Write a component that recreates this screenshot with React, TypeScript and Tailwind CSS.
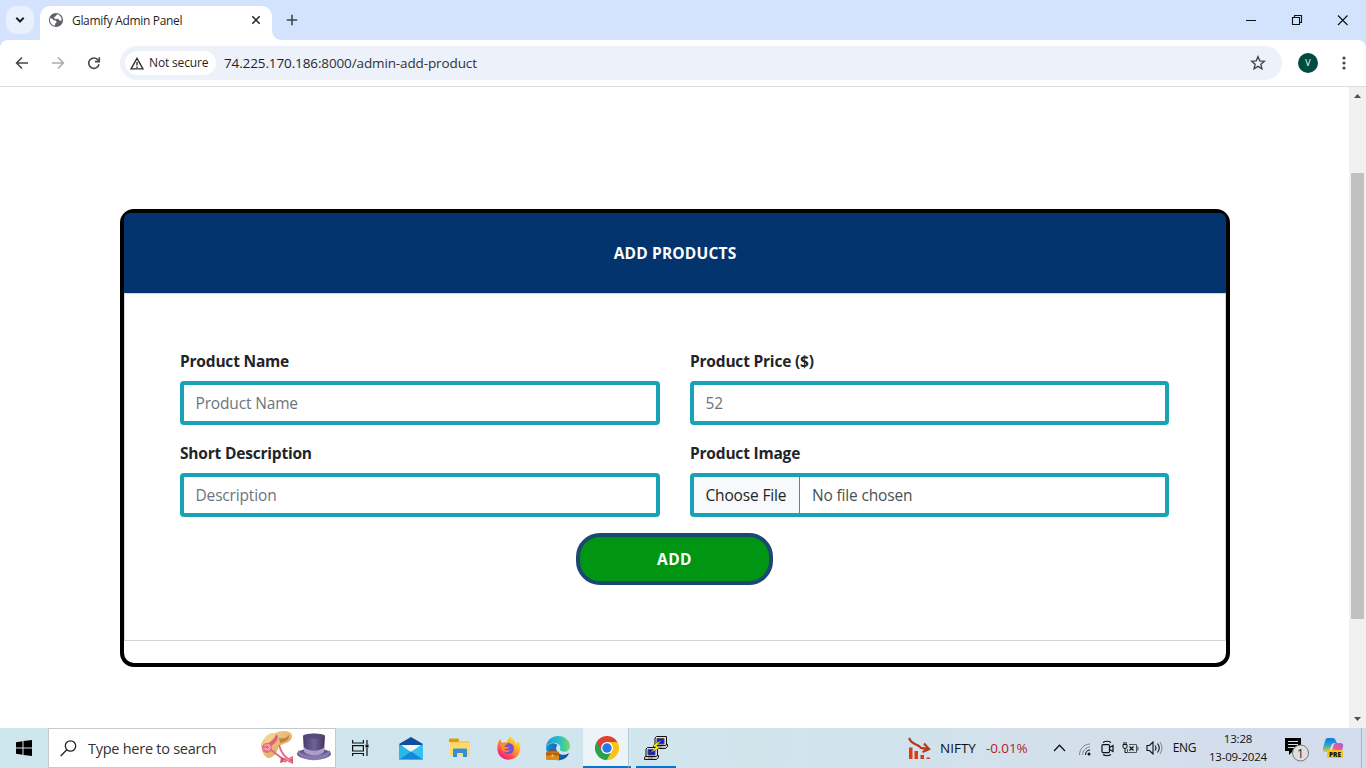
import type { ReactNode } from 'react';

function TabStrip() {
  return (
    <div className="flex h-10 bg-[#d3e3fd]">
      <div className="flex w-10 shrink-0 items-start pl-1.5 pt-1.5">
        <div className="flex h-7 w-7 items-center justify-center rounded-[10px] bg-[#e9f0fd]">
          <svg width="10" height="8" viewBox="0 0 10 8" fill="none" stroke="#1f1f1f" strokeWidth="2">
            <path d="M1.3 1.8 5 5.5 8.7 1.8" />
          </svg>
        </div>
      </div>
      <div className="mt-1.5 flex h-[34px] w-[232px] shrink-0 items-center rounded-t-[10px] bg-white pb-1.5 pl-2 pr-[11px]">
        <svg width="16" height="16" viewBox="0 0 16 16">
          <circle cx="8" cy="8" r="7.1" fill="#5f6368" />
          <path d="M1.9 6.2 4 6.4l1.6 1.8 2.2.3.9 1.6-1.6 1.6-.2 2C3.800 13.400 1.800 10.500 1.900 6.200ZM9.300 2.200 7.300 4.600 6.300 5.100 6.200 6.600 8.200 7.100 10.300 6.700 11.200 8.400 13.700 8.500C13.900 5.200 12 2.800 9.300 2.200Z" fill="#fff" />
        </svg>
        <span className="ml-2 flex-1 whitespace-nowrap pt-0.5 text-[12px] tracking-[-0.32px] text-[#1f1f1f]">Glamify Admin Panel</span>
        <svg width="10" height="10" viewBox="0 0 10 10" stroke="#1f1f1f" strokeWidth="1.5">
          <path d="M1.300 1.300 8.700 8.700M8.700 1.300 1.300 8.700" />
        </svg>
      </div>
      <svg className="shrink-0" width="10" height="40" viewBox="0 0 10 40">
        <path d="M0 30V40H10C4 40 0 36 0 30Z" fill="#fff" />
      </svg>
      <svg className="ml-1 mt-3.5 shrink-0" width="12" height="12" viewBox="0 0 12 12" stroke="#41464d" strokeWidth="1.6">
        <path d="M6 .800V11.200M.800 6H11.200" />
      </svg>
      <div className="flex-1" />
      <svg className="shrink-0" width="138" height="40" viewBox="0 0 138 40" fill="none" stroke="#111" strokeWidth="1">
        <path d="M18 20.500H28" />
        <path d="M64.500 17.500h7v7h-7zM66.500 17v-1.500h7v7H72" strokeWidth="1.100" />
        <path d="M110 15.500 119.500 25M119.500 15.500 110 25" strokeWidth="1.150" />
      </svg>
    </div>
  );
}

function Toolbar() {
  return (
    <div className="bg-[#d3e3fd]">
      <div className="flex h-[47px] items-center rounded-t-[8px] border-b border-[#dcdde0] bg-white pl-[15px] pr-4">
        <svg width="14" height="14" viewBox="0 0 14 14" fill="none" stroke="#474747" strokeWidth="1.600">
          <path d="M7 1.500 1.600 7 7 12.500M1.600 7H13" />
        </svg>
        <svg className="ml-[22px]" width="14" height="14" viewBox="0 0 14 14" fill="none" stroke="#ababab" strokeWidth="1.500">
          <path d="M7 1.500 12.400 7 7 12.500M12.400 7H1" />
        </svg>
        <svg className="ml-[22px]" width="14" height="14" viewBox="0 0 14 14" fill="none" stroke="#474747" strokeWidth="1.600">
          <path d="M12 8.300A5.200 5.200 0 1 1 11.200 4.200L12 5.100" />
          <path d="M12.300 1.200V5.600H7.900" />
        </svg>
        <div className="ml-[19px] flex h-[34px] w-[1162px] items-center rounded-full bg-[#edf1fa] pl-[5px] pr-4">
          <div className="flex h-6 w-[91px] items-center rounded-full bg-white pl-[5px]">
            <svg width="14" height="13" viewBox="0 0 14 13" fill="none" stroke="#303134" strokeWidth="1.400">
              <path d="M7 1.300 13 11.900H1ZM7 5V8.500M7 9.500V11" />
            </svg>
            <span className="ml-[5px] whitespace-nowrap text-[12px] font-medium tracking-[-0.150px] text-[#1f1f1f]">Not secure</span>
          </div>
          <span className="ml-2 flex-1 whitespace-nowrap text-[13.500px] tracking-[-0.120px] text-[#303236]">
            <span className="text-[#1f1f1f]">74.225.170.186</span>:8000/admin-add-product
          </span>
          <svg width="16" height="16" viewBox="0 0 16 16" fill="none" stroke="#474747" strokeWidth="1.400">
            <path d="M8 1.700 9.800 5.900 14.300 6.300 10.900 9.300 11.900 13.800 8 11.400 4.100 13.800 5.100 9.300 1.700 6.300 6.200 5.900Z" />
          </svg>
        </div>
        <div className="ml-4 flex h-5 w-5 items-center justify-center rounded-full bg-[#004d40] text-[9px] text-white">V</div>
        <svg className="ml-6" width="4" height="16" viewBox="0 0 4 16" fill="#474747">
          <circle cx="2" cy="3" r="1.600" /><circle cx="2" cy="8" r="1.600" /><circle cx="2" cy="13" r="1.600" />
        </svg>
      </div>
    </div>
  );
}

function Field({ label, children }: { label: string; children: ReactNode }) {
  return (
    <div className="min-w-0">
      <div className="mb-2 h-6 whitespace-nowrap text-[15.500px] font-bold leading-6 tracking-[-0.200px] text-[#212529]">{label}</div>
      <div className="flex h-11 items-stretch overflow-hidden rounded-[4px] border-4 border-[#17a2b8] bg-white text-[15.500px] leading-[37px] tracking-[-0.160px]">
        {children}
      </div>
    </div>
  );
}

function ProductForm() {
  return (
    <div className="flex min-w-0 flex-1 flex-col pl-[120px] pr-[119px] pt-[122px]">
      <div className="h-[458px] rounded-[14px] border-4 border-black">
        <div className="flex h-20 items-center justify-center rounded-t-[6px] bg-[#03346e] pt-px text-[15.500px] font-bold tracking-[0.180px] text-white">
          ADD PRODUCTS
        </div>
        <div className="h-[348px] border border-[#ced4da] px-[55px] pt-[55px]">
          <div className="grid grid-cols-[480px_479px] gap-x-[30px] gap-y-4">
            <Field label="Product Name">
              <span className="pl-[11.5px] text-[#6c757d]">Product Name</span>
            </Field>
            <Field label="Product Price ($)">
              <span className="pl-[11.5px] text-[#6c757d]">52</span>
            </Field>
            <Field label="Short Description">
              <span className="pl-[11.5px] text-[#6c757d]">Description</span>
            </Field>
            <Field label="Product Image">
              <span className="w-[106px] whitespace-nowrap border-r border-[#17a2b8] bg-[#f8f9fa] pl-[11.5px] text-[#212529]">Choose File</span>
              <span className="pl-3 text-[#495057]">No file chosen</span>
            </Field>
          </div>
          <button className="ml-[396px] mt-4 block h-[52px] w-[197px] rounded-[24px] border-4 border-[#1b4870] bg-[#009513] pt-px text-[15.500px] font-bold tracking-[0.400px] text-white">
            ADD
          </button>
        </div>
      </div>
    </div>
  );
}

function ScrollBar() {
  return (
    <div className="flex w-[17px] shrink-0 flex-col items-center bg-[#f1f1f1]">
      <svg className="shrink-0" width="7" height="16" viewBox="0 0 7 16" fill="#505050">
        <path d="M0 11 3.500 7 7 11Z" />
      </svg>
      <div className="mt-[70px] h-[446px] w-[13px] shrink-0 bg-[#c1c1c1]" />
      <div className="flex-1" />
      <svg className="mb-[7px] shrink-0" width="7" height="4" viewBox="0 0 7 4" fill="#505050">
        <path d="M0 0 3.500 4 7 0Z" />
      </svg>
    </div>
  );
}

function Hats() {
  return (
    <svg width="72" height="38" viewBox="0 0 72 38">
      <defs>
        <linearGradient id="straw" x1="0" y1="0" x2="1" y2="1"><stop stopColor="#f8d89b" /><stop offset="1" stopColor="#d99c4c" /></linearGradient>
        <linearGradient id="felt"><stop stopColor="#463c68" /><stop offset=".5" stopColor="#6f6298" /><stop offset="1" stopColor="#43365e" /></linearGradient>
      </defs>
      <path d="M1 15C4 9 8 3 15 4 20 1 32 1 32 7 32 13 25 14 19 17 17 23 14 29 8 29 4 28 1 21 1 15Z" fill="url(#straw)" />
      <path d="M6 9C9 3 18 3 19 8 16 11 13 14 9 18L4 16Z" fill="#f4cf8f" />
      <path d="M19 9Q25 11 29 6Q30 12 20 14Z" fill="#bd8140" />
      <path d="M5 15C10 14 15 10 16 5L18 7C18 13 12 17 7 19Z" fill="#dc6478" />
      <path d="M11 21C16 25 21 28 26 33M19 16C21 23 24 28 30 31" fill="none" stroke="#e2647c" strokeWidth="1.800" />
      <circle cx="7" cy="19" r="5" fill="#e86a80" />
      <path d="M4 17q3-3 5 0t-4 4M8 15q4 3 1 6M3 20q4-2 6 2" fill="none" stroke="#ffb4bd" />
      <path d="M21 28 27 30 33 27 33 35 27 32 20 34Z" fill="#d85270" />
      <path d="M24 29 32 33M23 32 33 29" stroke="#f492a4" />
      <ellipse cx="54" cy="25" rx="17" ry="5.500" fill="#66598c" />
      <path d="M38 21C42 28 64 29 70 21 73 34 36 35 38 21Z" fill="#8779b2" />
      <path d="M43 7C47 4 61 4 65 7L64 23C59 28 49 27 44 23Z" fill="url(#felt)" />
      <path d="M44 18C49 23 59 23 64.500 18L64 23C59 28 49 27 44 23Z" fill="#a99fca" />
      <ellipse cx="54" cy="7" rx="11" ry="2.500" fill="#564a78" />
    </svg>
  );
}

function Mail() {
  return (
    <svg width="24" height="24" viewBox="0 0 24 24">
      <path d="M0 8 12 1 24 8V16H0Z" fill="#0d4f9c" />
      <path d="M2 9H22L12 18Z" fill="#f3f4f4" />
      <path d="M0 8 12 16 0 23.500Z" fill="#29b7e9" />
      <path d="M24 8 0 23.500H24Z" fill="#35c1f1" />
      <path d="M12 15.500 24 23.500H0Z" fill="#1688d9" />
    </svg>
  );
}

function Explorer() {
  return (
    <svg width="22" height="20" viewBox="0 0 22 20">
      <path d="M1 1H9L11 3H20Q21 3 21 4V18H1Z" fill="#fccb51" />
      <path d="M0 1.500Q0 .500 1 .500H9Q10 .500 10 2T9 4H0Z" fill="#dc9d0c" />
      <path d="M1 5H21V18H1Z" fill="#ffda6b" />
      <path d="M4 11.500Q4 10.500 5 10.500H17Q18 10.500 18 11.500V19H14V15H8V19H4Z" fill="#348dd5" />
    </svg>
  );
}

function Firefox() {
  return (
    <svg width="24" height="24" viewBox="0 0 24 24">
      <defs>
        <linearGradient id="fire" x1=".9" y1="0" x2=".2" y2="1"><stop stopColor="#fff44f" /><stop offset=".4" stopColor="#ffac1f" /><stop offset=".75" stopColor="#ff4a55" /><stop offset="1" stopColor="#e31587" /></linearGradient>
      </defs>
      <path d="M13 0C15 3 18 4 19 8L21 5C24 9 24 14 21 19 17 25 7 25 3 20-1 15 0 8 3 3L5 7 10 6C11 3 12 2 13 0Z" fill="url(#fire)" />
      <circle cx="11.500" cy="12.500" r="5.500" fill="#7550d9" />
      <path d="M3 8C6 6 9 7 11 8 8 9 7 10 8 11L12 11C11 13.500 8 13 7 13 9 15 12 15 14 13 12 17 8 17 5 14Z" fill="#ff8a30" />
    </svg>
  );
}

function Edge() {
  return (
    <svg width="26" height="26" viewBox="0 0 26 26">
      <defs>
        <linearGradient id="edge-top"><stop stopColor="#2098dc" /><stop offset=".55" stopColor="#26bfc4" /><stop offset="1" stopColor="#75dc5c" /></linearGradient>
        <linearGradient id="edge-low"><stop stopColor="#168cd8" /><stop offset="1" stopColor="#144795" /></linearGradient>
      </defs>
      <path d="M1 13C1 6 6 1 13 1 20 1 25 6 25 11 25 16 20 18 16 16 14 15 16 13 15 11 12 6 3 7 1 13Z" fill="url(#edge-top)" />
      <path d="M1 13C3 8 9 7 12.500 10 10 12 11 17 15 19 18 20.500 21 20 24 18 22 24 16 26 11 25Q2 22 1 13Z" fill="url(#edge-low)" />
      <rect x="1" y="16.500" width="13" height="8.500" rx="1" fill="#df8b1c" />
      <path d="M5 16.500V15H10V16.500" fill="none" stroke="#8e5415" strokeWidth="1.500" />
      <path d="M1 17.500H14V20.500H1Z" fill="#ad621a" /><path d="M6.500 19.500h2v2h-2z" fill="#ffd16c" />
    </svg>
  );
}

function Chrome() {
  return (
    <svg width="24" height="24" viewBox="0 0 24 24">
      <path d="M12 12 1.600 6A12 12 0 0 0 12 24L17.200 15Z" fill="#27a34b" />
      <path d="M12 12 12 24A12 12 0 0 0 22.400 6H12L17.200 15 12 24Z" fill="#fbc116" />
      <path d="M12 6H22.400A12 12 0 0 0 1.600 6L6.800 15 12 12Z" fill="#dc4134" />
      <circle cx="12" cy="12" r="6" fill="#fff" /><circle cx="12" cy="12" r="4.700" fill="#2876e7" />
    </svg>
  );
}

function Putty() {
  return (
    <svg width="24" height="24" viewBox="0 0 24 24" stroke="#111" strokeWidth="1" strokeLinejoin="round">
      <path d="M11 8.500H23.500V10.500L21.500 12.500H9.500V10.500Z" fill="#c9c9c9" />
      <path d="M12.500.500H22.500V8.500L21 9.500H11V2Z" fill="#ddd" />
      <path d="M13 2.500H20V8H13Z" fill="#0a16e6" stroke="#555" />
      <path d="M2 19.500H14.500V21.500L12.500 23.500H.500V21.500Z" fill="#c9c9c9" />
      <path d="M3.500 11.500H13.500V19.500L12 20.500H2V13Z" fill="#ddd" />
      <path d="M4 13.500H11V19H4Z" fill="#0a16e6" stroke="#555" />
      <path d="M4 22H9M13 11H18" stroke="#777" />
      <path d="M17.500 4 9 9.500 12 11 6.500 16.500 15.500 12 12.500 10Z" fill="#ffec00" stroke="#736a00" strokeWidth=".4" />
    </svg>
  );
}

function Taskbar() {
  return (
    <div className="flex h-10 items-stretch bg-linear-to-r from-[#cee6ee] via-[#d1e5ed] to-[#d3dceb] text-[#111]">
      <div className="flex w-12 shrink-0 items-center justify-center">
        <svg width="16" height="16" viewBox="0 0 16 16" fill="#000"><path d="M0 2.200 6.500 1.300V7.500H0ZM7.500 1.100 16 0V7.500H7.500ZM0 8.500H6.500V14.700L0 13.800ZM7.500 8.500H16V16L7.500 14.900Z" /></svg>
      </div>
      <div className="flex w-[288px] shrink-0 items-center border border-[#c4c9cb] bg-white pl-[11px]">
        <svg width="17" height="17" viewBox="0 0 17 17" fill="none" stroke="#222" strokeWidth="1.300"><circle cx="10.500" cy="6" r="5.200" /><path d="M6.800 9.700 .700 16" /></svg>
        <span className="ml-[11px] flex-1 whitespace-nowrap pt-px text-[14.500px] tracking-[-0.260px] text-[#333]">Type here to search</span>
        <div className="mr-[3px]"><Hats /></div>
      </div>
      <div className="flex w-12 shrink-0 items-center justify-center">
        <svg width="17" height="16" viewBox="0 0 17 16" fill="none" stroke="#111" strokeWidth="1.200"><path d="M.600 0V3H11.400V0M.600 16V13.500H11.400V16M.600 5.600H11.400V11H.600ZM15 0V4M15 8V16" /><path d="M13.500 4.500h3v3h-3z" fill="#111" stroke="none" /></svg>
      </div>
      <div className="ml-[3px] flex w-12 shrink-0 items-center justify-center"><Mail /></div>
      <div className="flex w-[49px] shrink-0 items-center justify-center"><Explorer /></div>
      <div className="flex w-[49px] shrink-0 items-center justify-center"><Firefox /></div>
      <div className="flex w-[50px] shrink-0 items-center justify-center"><Edge /></div>
      <div className="flex w-[45px] shrink-0 items-center justify-center border-b-2 border-[#0078d7] bg-[#edf4f8] pl-[3px] pt-0.5"><Chrome /></div>
      <div className="w-[3px] shrink-0 border-b-2 border-l border-b-[#0078d7] border-l-[#b4c9d6] bg-[#d9e9f1]" />
      <div className="ml-[5px] flex w-10 shrink-0 items-center justify-center border-b-2 border-[#0078d7] pt-0.5"><Putty /></div>
      <div className="flex-1" />
      <div className="flex w-[32px] shrink-0 items-center">
        <svg width="23" height="23" viewBox="0 0 23 23"><path d="M1 1C4 9 10 6 13 11L20 12M16 6.500 21 12 14.500 15" fill="none" stroke="#b83a1b" strokeWidth="2.300" /><path d="M1 10.500H4.500V22H1ZM6.500 14H10V22H6.500ZM12.500 18H16V22H12.500ZM18.500 20.500H22V22H18.500Z" fill="#df3b0c" /></svg>
      </div>
      <span className="flex w-[46px] shrink-0 items-center text-[13.500px]">NIFTY</span>
      <span className="flex w-[60px] shrink-0 items-center whitespace-nowrap text-[13.500px] tracking-[-0.100px] text-[#b71c1c]">-0.01%</span>
      <div className="flex w-[26px] shrink-0 items-center justify-center"><svg width="13" height="8" viewBox="0 0 13 8" fill="none" stroke="#111" strokeWidth="1.300"><path d="M1 7 6.500 1.300 12 7" /></svg></div>
      <div className="flex w-[25px] shrink-0 items-center justify-center pt-0.5"><svg width="14" height="14" viewBox="0 0 14 14" fill="none"><path d="M1.500 13C1.500 7 6 2 12 2M4.500 13C4.500 9 8 5 12 5" stroke="#7c868e" /><path d="M7.500 13C7.500 10 9 8 12 8" stroke="#111" /><circle cx="11" cy="12" r="1.500" fill="#111" /></svg></div>
      <div className="flex w-[21px] shrink-0 items-center justify-center"><svg width="13" height="17" viewBox="0 0 13 17" fill="none" stroke="#111" strokeWidth="1.200"><rect x="1" y="4.600" width="7.500" height="8" rx="1" /><path d="M8.500 7.500 12 5.500V11.500L8.500 9.500M2 2.500Q6 0 10 2.500M2 14.500Q6 17 10 14.500" /></svg></div>
      <div className="flex w-[25px] shrink-0 items-center justify-center"><svg width="17" height="12" viewBox="0 0 17 12" fill="none" stroke="#111"><path d="M1 2.500H5V5Q5 6.500 3 6.500T1 5ZM2 0V2M4 0V2M3 6.500V10.500H5" /><path d="M7 2.500H14.500V10.500H5.500V7M14.500 5H16V8H14.500" stroke="#4d5860" /><path d="M7.500 4.500 11.500 8.500M11.500 4.500 7.500 8.500" strokeWidth="1.200" /></svg></div>
      <div className="flex w-[23px] shrink-0 items-center justify-center"><svg width="17" height="14" viewBox="0 0 17 14" fill="none" stroke="#111" strokeWidth="1.100"><path d="M1 4.500H3.500L7 1V13L3.500 9.500H1ZM9 4.500Q11 7 9 9.500M11.500 2.500Q15 7 11.500 11.500" /><path d="M14 1Q18 7 14 13" stroke="#87919a" /></svg></div>
      <span className="flex w-[37px] shrink-0 items-center justify-center text-[12px] tracking-[-0.300px]">ENG</span>
      <div className="flex w-[70px] shrink-0 flex-col items-center justify-center pb-px text-[11.500px] leading-[18px] tracking-[-0.200px]"><span>13:28</span><span>13-09-2024</span></div>
      <div className="flex w-[47px] shrink-0 items-center justify-center pt-1">
        <svg width="24" height="24" viewBox="0 0 24 24"><path d="M0 0H16V13H8L4 17V13H0Z" fill="#000" /><path d="M3 3.500H13M3 6.500H13M3 9.500H10" stroke="#d3dceb" /><circle cx="15.500" cy="15" r="8" fill="#dedede" stroke="#777" /><text x="15.500" y="19.500" textAnchor="middle" fontSize="12" fontFamily="Open Sans, sans-serif" fill="#222">1</text></svg>
      </div>
      <div className="flex w-[26px] shrink-0 items-center justify-center">
        <svg width="22" height="22" viewBox="0 0 22 22">
          <defs><linearGradient id="pilot" x1="0" y1="0" x2="0" y2="1"><stop stopColor="#1677e8" /><stop offset=".5" stopColor="#21aac8" /><stop offset="1" stopColor="#edc934" /></linearGradient><linearGradient id="pilot-warm" x1="1" y1="0" x2="0" y2="1"><stop stopColor="#9d62e5" /><stop offset=".55" stopColor="#ef5799" /><stop offset="1" stopColor="#fba845" /></linearGradient></defs>
          <path d="M5 1H11Q13 1 14 4L15 6H12Q10 6 9 9L7 15H3Q0 15 1 11L3 4Q4 1 5 1Z" fill="url(#pilot)" />
          <path d="M14 6H18Q22 6 21 10L19 16H9L11 10Q12 6 14 6Z" fill="url(#pilot-warm)" />
          <rect x="5" y="13" width="16" height="8" rx="1.500" fill="#ffc21b" /><text x="13" y="19.500" textAnchor="middle" fontSize="6.500" fontWeight="800" fontFamily="Open Sans, sans-serif" fill="#111">PRE</text>
        </svg>
      </div>
      <div className="ml-[15px] w-[5px] shrink-0 border-l border-[#acb5c2]" />
    </div>
  );
}

export default function App() {
  return (
    <div className="flex h-[768px] w-[1366px] flex-col overflow-hidden bg-white font-['Open_Sans',sans-serif]">
      <TabStrip />
      <Toolbar />
      <div className="flex min-h-0 flex-1">
        <ProductForm />
        <ScrollBar />
      </div>
      <Taskbar />
    </div>
  );
}
